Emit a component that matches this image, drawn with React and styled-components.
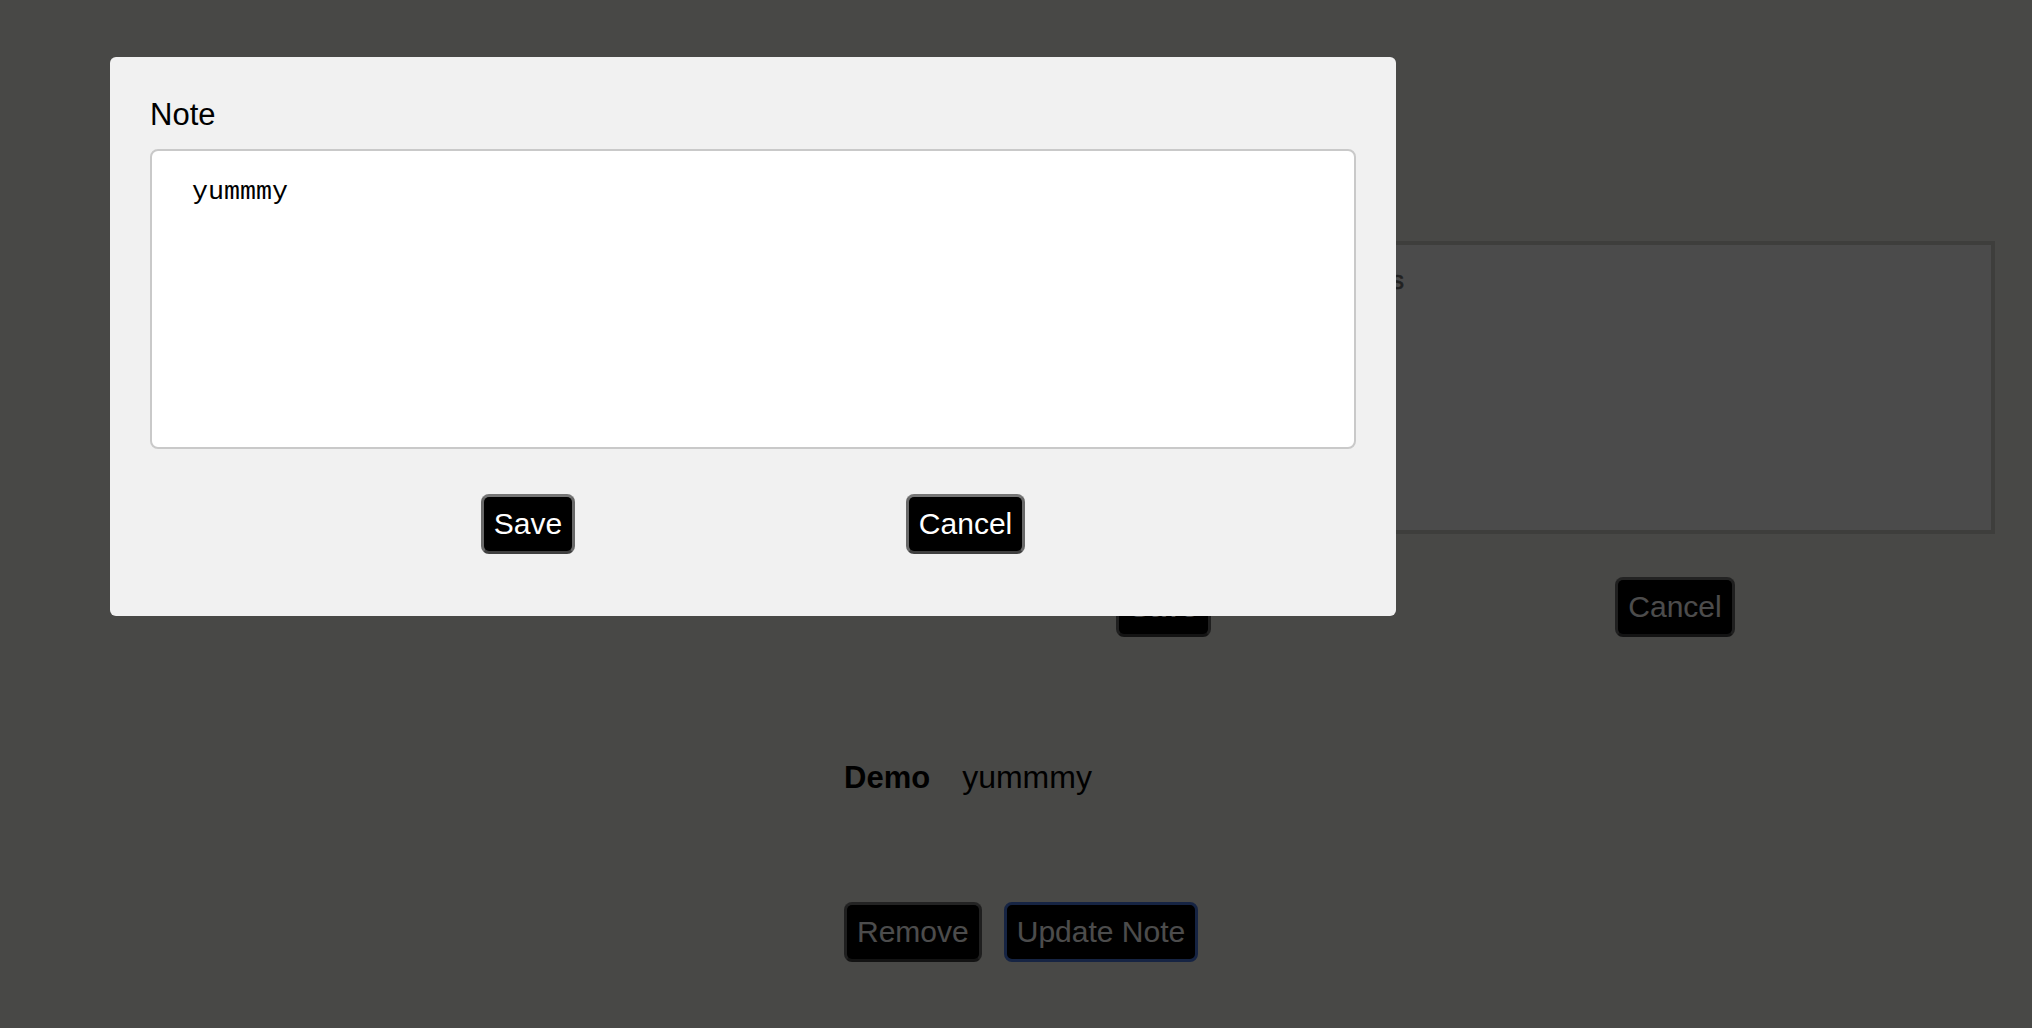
import styled, { createGlobalStyle } from 'styled-components';

const GlobalStyle = createGlobalStyle`
    html, body {
        margin: 0;
        padding: 0;
    }
    body {
        font-family: "Liberation Sans", Arial, sans-serif;
        background: #f0f0e9;
    }
    * {
        box-sizing: border-box;
    }
`;

const Page = styled.div`
    min-height: 100vh;
    padding: 241px 37px 0 844px;
    background: #f0f0e9;
`;

const Form = styled.div`
    margin-left: 12px;
`;

const NotesBox = styled.div`
    height: 293px;
    border: 4px solid #cfcfc8;
    background: #fafafa;
    padding: 20px 40px;
    overflow: hidden;
`;

const Hint = styled.p`
    margin: 0;
    font-size: 26px;
    color: #6e6e6e;
    -webkit-text-stroke: 0.6px #6e6e6e;
    white-space: nowrap;
`;

const ButtonRow = styled.div`
    display: flex;
    justify-content: ${({ $justify }) => $justify || 'space-around'};
    margin-top: ${({ $top }) => $top}px;
    padding: 0 ${({ $inset }) => $inset || 0}px;
`;

const Button = styled.button`
    font-family: "Liberation Sans", Arial, sans-serif;
    font-size: 30px;
    line-height: normal;
    color: #fff;
    background: #000;
    padding: 10px;
    border: 3px solid;
    border-color: ${({ $focus }) =>
        $focus ? '#4a78e0' : '#767676 #686868 #404040 #686868'};
    border-radius: 8px;
    cursor: pointer;
`;

const Entry = styled.div`
    display: flex;
    align-items: baseline;
    gap: 32px;
    margin-top: 122px;
    font-size: 32px;
    color: #000;
`;

const EntryTitle = styled.span`
    font-weight: 700;
    font-size: 31px;
`;

const Actions = styled.div`
    display: flex;
    gap: 22px;
    margin-top: 106px;
`;

const Overlay = styled.div`
    position: fixed;
    inset: 0;
    background: rgba(0, 0, 0, 0.7);
`;

const Modal = styled.div`
    width: 1286px;
    height: 559px;
    margin: 57px 0 0 110px;
    padding: 40px 40px 60px;
    background: #f1f1f1;
    border-radius: 6px;
`;

const Label = styled.label`
    display: block;
    font-size: 31px;
    color: #000;
    margin-bottom: 16px;
`;

const NoteInput = styled.textarea`
    display: block;
    width: 100%;
    height: 300px;
    padding: 26px 40px;
    border: 2px solid #c9c9c9;
    border-radius: 8px;
    background: #fff;
    font-family: "Liberation Mono", "Courier New", monospace;
    font-size: 26.67px;
    color: #000;
    resize: none;
    outline: none;
`;

const App = () => {
    return (
        <>
            <GlobalStyle />
            <Page>
                <Form>
                    <NotesBox>
                        <Hint>Write a short note about this recipe or notes</Hint>
                    </NotesBox>
                    <ButtonRow $top={43} $inset={58}>
                        <Button>Save</Button>
                        <Button>Cancel</Button>
                    </ButtonRow>
                </Form>
                <Entry>
                    <EntryTitle>Demo</EntryTitle>
                    <span>yummmy</span>
                </Entry>
                <Actions>
                    <Button>Remove</Button>
                    <Button $focus>Update Note</Button>
                </Actions>
            </Page>
            <Overlay>
                <Modal>
                    <Label htmlFor="note">Note</Label>
                    <NoteInput id="note" defaultValue="yummmy" />
                    <ButtonRow $top={45} $justify="space-evenly">
                        <Button>Save</Button>
                        <Button>Cancel</Button>
                    </ButtonRow>
                </Modal>
            </Overlay>
        </>
    );
};

export default App;
